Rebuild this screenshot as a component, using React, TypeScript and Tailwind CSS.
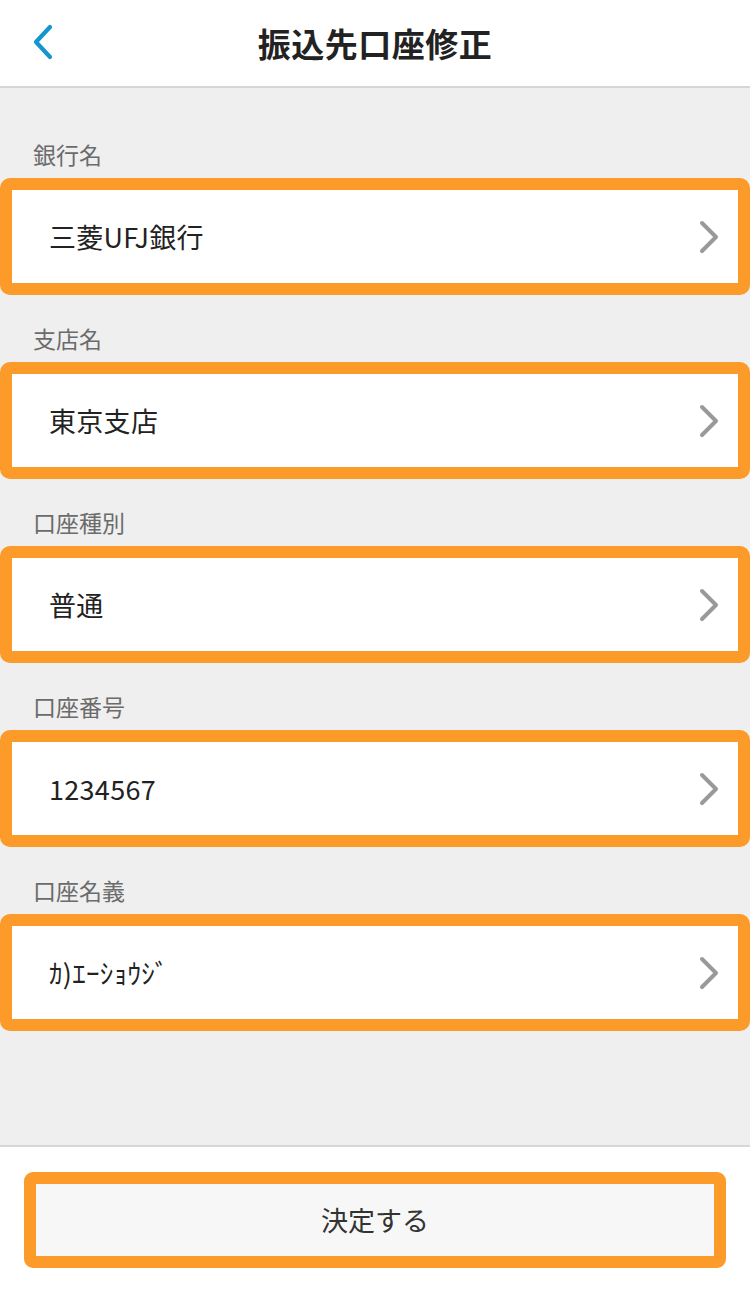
const fields = [
  { label: '銀行名', value: '三菱UFJ銀行' },
  { label: '支店名', value: '東京支店' },
  { label: '口座種別', value: '普通' },
  { label: '口座番号', value: '1234567' },
  { label: '口座名義', value: 'ｶ)ｴｰｼｮｳｼﾞ' },
]

function Chevron() {
  return (
    <svg width="22" height="34" viewBox="0 0 22 34" fill="none" className="shrink-0">
      <path d="M4 3l14 14L4 31" stroke="#999999" strokeWidth="4" strokeLinecap="round" strokeLinejoin="round" />
    </svg>
  )
}

export default function App() {
  return (
    <div
      className="flex h-[1292px] w-[750px] flex-col bg-white text-[#222]"
      style={{ fontFamily: '"Noto Sans CJK JP", "Noto Sans", sans-serif' }}
    >
      {/* Header */}
      <header className="relative flex h-[88px] shrink-0 items-center justify-center border-b-2 border-[#d6d6d6] bg-white">
        <button className="absolute left-[30px] top-[24px] text-[#1595cf]">
          <svg width="26" height="36" viewBox="0 0 26 36" fill="none">
            <path d="M20 3L6 18l14 15" stroke="currentColor" strokeWidth="4.2" strokeLinecap="round" strokeLinejoin="round" />
          </svg>
        </button>
        <h1 className="text-[33px] font-bold leading-none tracking-[0.5px]">振込先口座修正</h1>
      </header>

      {/* Fields */}
      <main className="flex-1 bg-[#efefef] pt-[23px]">
        {fields.map((f) => (
          <section key={f.label}>
            <div className="px-[33px] pb-[11px] pt-[30px] text-[23px] leading-[26px] text-[#6b6b6b]">{f.label}</div>
            <div className="flex h-[117px] items-center justify-between rounded-[10px] border-[12px] border-[#fc9a2a] bg-white pl-[37px] pr-[18px]">
              <span className="text-[27px] leading-none tracking-[0.3px]">{f.value}</span>
              <Chevron />
            </div>
          </section>
        ))}
      </main>

      {/* Footer */}
      <footer className="shrink-0 border-t-2 border-[#d6d6d6] bg-white px-[24px] pb-[24px] pt-[25px]">
        <button className="flex h-[96px] w-full items-center justify-center rounded-[9px] border-[12px] border-[#fc9a2a] bg-[#f7f7f7] text-[27px] text-[#333]">
          決定する
        </button>
      </footer>
    </div>
  )
}
